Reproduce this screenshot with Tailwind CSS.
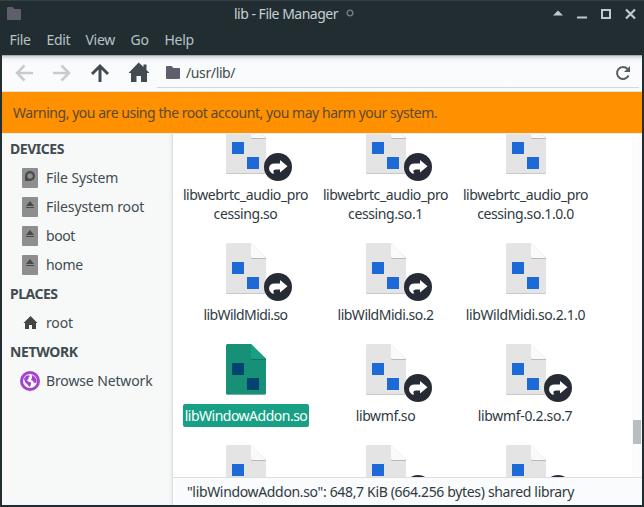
<!DOCTYPE html>
<html lang="en">
<head>
<meta charset="utf-8">
<title>lib - File Manager</title>
<script src="https://cdn.jsdelivr.net/npm/@tailwindcss/browser@4"></script>
</head>
<body class="w-[644px] h-[507px] overflow-hidden bg-[#222d32] font-['Noto_Sans',sans-serif] text-[14px] leading-[19px] text-[#414b50] whitespace-nowrap">
<svg class="hidden">
  <symbol id="doc" viewBox="0 0 40 51">
    <path d="M1.5 1H25L40 16V49.500q0 1.500-1.500 1.500h-37Q0 51 0 49.500V2.500Q0 1 1.500 1Z" fill="#c8c8c8"/>
    <path d="M1.500 0H25L40 15V48.500q0 1.500-1.500 1.500h-37Q0 50 0 48.500V1.500Q0 0 1.500 0Z" fill="#e4e4e4"/>
    <path d="M25 1V14.500q0 1.500 1.500 1.500H40V15Z" fill="#b9b9b9"/>
    <path d="M25 0V13.500q0 1.500 1.500 1.500H40Z" fill="#fafafa"/>
    <path d="M6 19h12v12H6ZM21 34h12v12H21Z" fill="#1d69d6"/>
  </symbol>
  <symbol id="docsel" viewBox="0 0 40 51">
    <path d="M1.500 1H25L40 16V49.500q0 1.500-1.500 1.500h-37Q0 51 0 49.500V2.500Z" fill="#127a66" opacity=".6"/>
    <path d="M1.500 0H25L40 15V48.500q0 1.500-1.500 1.500h-37Q0 50 0 48.500V1.500Q0 0 1.500 0Z" fill="#169178"/>
    <path d="M25 1V14.500q0 1.500 1.500 1.500H40V15Z" fill="#117361"/>
    <path d="M25 0V13.500q0 1.500 1.500 1.500H40Z" fill="#18a085"/>
    <path d="M6 19h12v12H6ZM21 34h12v12H21Z" fill="#03436f"/>
  </symbol>
  <symbol id="link" viewBox="0 0 28 28">
    <circle cx="14" cy="14" r="14" fill="#272b35"/>
    <path d="M16 7 23.500 13.200 16 19.500V16.500H12q-2.500 0-2.700 1.600 0 1.200 1 2.400H8Q5 18.500 5 15.800 5 10.500 11 10.500h5Z" fill="#fff"/>
  </symbol>
  <symbol id="folder" viewBox="0 0 14 13">
    <path d="M1 0H5.500L7.500 2H13q1 0 1 1v9q0 1-1 1H1q-1 0-1-1V1Q0 0 1 0Z" fill="#5d606c"/>
  </symbol>
  <symbol id="eject" viewBox="0 0 16 20">
    <rect width="16" height="20" rx="1" fill="#8e8e8e"/><path d="M8 4 12 9H4ZM4 10h8v1H4Z" fill="#4a4a4a"/>
  </symbol>
</svg>

<header class="h-[55px] flex flex-col border-t border-[#344047] text-[#b6c2c6]">
  <div class="h-[26px] pl-[7px] pr-[8px] flex items-center">
    <svg class="w-[14px] h-[13px] shrink-0 mt-[-2px]"><use href="#folder"/></svg>
    <div class="flex items-center ml-[213px] mt-[-2px]">
      <span class="w-[104px] text-[#c6d0d3] tracking-[-0.5px]">lib - File Manager</span>
      <svg class="w-[8px] h-[8px] ml-[8px]" viewBox="0 0 8 8"><circle cx="4" cy="4" r="2.900" fill="none" stroke="#77808b" stroke-width="1.400"/></svg>
    </div>
    <svg class="w-[83px] h-[12px] ml-auto mt-[-1px]" viewBox="0 0 83 12">
      <path d="M0 7.500 5 2.500 10 7.500Z" fill="#c0cacd"/>
      <path d="M24 8.500h10v2H24Z" fill="#c0cacd"/>
      <path d="M49 2h8v8h-8Z" fill="none" stroke="#c0cacd" stroke-width="2"/>
      <path d="m73 1.500 9 9m0-9-9 9" stroke="#c0cacd" stroke-width="2.200"/>
    </svg>
  </div>
  <nav class="h-[24px] pl-[9.500px] flex items-center gap-[16px] tracking-[-0.3px]">
    <span class="w-[21px]">File</span><span class="w-[23px]">Edit</span><span class="w-[29px]">View</span><span class="w-[18px]">Go</span><span class="w-[29px]">Help</span>
  </nav>
</header>

<main class="ml-[2px] w-[640px] h-[450px] flex flex-col bg-white">
  <div class="h-[37px] shrink-0 bg-[#fafbfc] bg-linear-to-b from-[#d0d2d3] from-0% via-[#f3f4f5] via-10% to-[#fafbfc] to-20% border-t border-[#a9adaf] border-b border-b-[#e1e3e5] flex">
    <svg class="w-[154px] h-[35px] shrink-0" viewBox="0 0 154 35" fill="none" stroke-width="2.500">
      <path d="M31 17H15.500M22.500 9.500 15 17l7.500 7.500" stroke="#c8cbcc"/>
      <path d="M51 17h15.500M59.500 9.500 67 17l-7.500 7.500" stroke="#c8cbcc"/>
      <path d="M98 26V11M90 18l8-8 8 8" stroke="#414b50" stroke-width="3"/>
      <path d="M136.700 6.500 126.500 17h2.500v9h5.500v-6h4.500v6h6v-9h2.500L144.500 14V8.500h-3V11Z" fill="#414b50"/>
    </svg>
    <div class="flex-1 ml-[1px] mr-[3px] h-[32px] border-b border-[#d5d8da] flex items-center pl-[9px] pr-[8px]">
      <svg class="w-[14px] h-[13px] shrink-0 mt-[2px]"><use href="#folder"/></svg>
      <span class="ml-[6px] mt-[2px] tracking-[-0.38px]">/usr/lib/</span>
      <svg class="w-[16px] h-[16px] ml-auto mt-[2px]" viewBox="0 0 16 16"><path d="M13.500 10.500A6 6 0 1 1 12.500 4" fill="none" stroke="#555e62" stroke-width="2"/><path d="M15 1v6H9Z" fill="#555e62"/></svg>
    </div>
  </div>
  <div class="h-[41px] shrink-0 bg-[#ff9100] pl-[11px] flex items-center text-[#5b4a2b] tracking-[-0.46px]"><span>Warning, you are using the root account, you may harm your system.</span></div>
  <div class="flex-1 min-h-0 flex border-t border-[#eceeee]">
    <aside class="w-[171px] shrink-0 bg-[#f7f9f8] border-r border-[#dfe2e2] pt-[5px] flex flex-col tracking-[-0.13px] shadow-[inset_-3px_0_3px_-2px_#e4e6e6]">
      <div class="h-[19px] mb-[5px] pl-[8px] font-bold tracking-[-0.45px]">DEVICES</div>
      <div class="h-[29px] pl-[20px] flex items-center"><svg class="w-[16px] h-[20px]" viewBox="0 0 16 20"><rect width="16" height="20" rx="1" fill="#8e8e8e"/><circle cx="8" cy="8" r="3.900" fill="none" stroke="#4a4a4a" stroke-width="2.200"/><path d="M3 8v5h5l-3-2Z" fill="#4a4a4a"/></svg><span class="ml-[8px]">File System</span></div>
      <div class="h-[29px] pl-[20px] flex items-center"><svg class="w-[16px] h-[20px]"><use href="#eject"/></svg><span class="ml-[8px]">Filesystem root</span></div>
      <div class="h-[29px] pl-[20px] flex items-center"><svg class="w-[16px] h-[20px]"><use href="#eject"/></svg><span class="ml-[8px] tracking-[-0.4px]">boot</span></div>
      <div class="h-[29px] pl-[20px] flex items-center"><svg class="w-[16px] h-[20px]"><use href="#eject"/></svg><span class="ml-[8px] tracking-[-0.3px]">home</span></div>
      <div class="h-[29px] pl-[8px] flex items-center font-bold tracking-[-0.5px]">PLACES</div>
      <div class="h-[29px] pl-[20px] flex items-center"><svg class="w-[16px] h-[14px]" viewBox="0 0 16 14"><path d="M8.500 0 1.500 7H3v6h4V9h3v4h4V7h1.500Z" fill="#444"/></svg><span class="ml-[8px]">root</span></div>
      <div class="h-[29px] pl-[8px] flex items-center font-bold tracking-[-0.35px]">NETWORK</div>
      <div class="h-[29px] pl-[18px] flex items-center"><svg class="w-[20px] h-[20px]" viewBox="0 0 20 20"><circle cx="10" cy="10" r="8.500" fill="#fff" stroke="#a343cf" stroke-width="3"/><path d="M4 7.500 6 5l3-1 .5 2-1.500 1 1 1-2 1 1 1.500 3 1v2l-1.500 2.500-2-2.500L5 11ZM12 4l3 2 1.500 3v2.500L14 12l-1-2-2-1 1-2Z" fill="#a343cf"/></svg><span class="ml-[6px]">Browse Network</span></div>
    </aside>
    <section class="flex-1 min-w-0 flex flex-col">
      <div class="flex-1 min-h-0 flex overflow-hidden">
        <div class="mt-[-11px] ml-[3px] h-[500px] grid grid-cols-[repeat(3,140px)] grid-rows-[120px_101px_101px_101px] text-center text-[#2f3a3f] shrink-0 tracking-[-0.4px]">
          <div class="flex flex-col items-center"><div class="relative w-[40px] h-[51px]"><svg class="w-[40px] h-[51px]"><use href="#doc"/></svg><svg class="absolute left-[38px] top-[30px] w-[28px] h-[28px]"><use href="#link"/></svg></div><div class="mt-[11px] mr-px">libwebrtc_audio_pro<br>cessing.so</div></div>
          <div class="flex flex-col items-center"><div class="relative w-[40px] h-[51px]"><svg class="w-[40px] h-[51px]"><use href="#doc"/></svg><svg class="absolute left-[38px] top-[30px] w-[28px] h-[28px]"><use href="#link"/></svg></div><div class="mt-[11px] mr-px">libwebrtc_audio_pro<br>cessing.so.1</div></div>
          <div class="flex flex-col items-center"><svg class="w-[40px] h-[51px]"><use href="#doc"/></svg><div class="mt-[11px] mr-px">libwebrtc_audio_pro<br>cessing.so.1.0.0</div></div>

          <div class="flex flex-col items-center"><div class="relative w-[40px] h-[51px]"><svg class="w-[40px] h-[51px]"><use href="#doc"/></svg><svg class="absolute left-[38px] top-[30px] w-[28px] h-[28px]"><use href="#link"/></svg></div><div class="mt-[11px] mr-px tracking-[-0.58px]">libWildMidi.so</div></div>
          <div class="flex flex-col items-center"><div class="relative w-[40px] h-[51px]"><svg class="w-[40px] h-[51px]"><use href="#doc"/></svg><svg class="absolute left-[38px] top-[30px] w-[28px] h-[28px]"><use href="#link"/></svg></div><div class="mt-[11px] mr-px tracking-[-0.5px]">libWildMidi.so.2</div></div>
          <div class="flex flex-col items-center"><svg class="w-[40px] h-[51px]"><use href="#doc"/></svg><div class="mt-[11px] mr-px">libWildMidi.so.2.1.0</div></div>

          <div class="flex flex-col items-center"><svg class="w-[40px] h-[51px]"><use href="#docsel"/></svg><div class="mt-[9px] w-[126px] h-[23px] py-[2px] rounded-[2px] bg-[#18a085] text-white tracking-[-0.5px]">libWindowAddon.so</div></div>
          <div class="flex flex-col items-center"><div class="relative w-[40px] h-[51px]"><svg class="w-[40px] h-[51px]"><use href="#doc"/></svg><svg class="absolute left-[38px] top-[30px] w-[28px] h-[28px]"><use href="#link"/></svg></div><div class="mt-[11px] mr-px">libwmf.so</div></div>
          <div class="flex flex-col items-center"><div class="relative w-[40px] h-[51px]"><svg class="w-[40px] h-[51px]"><use href="#doc"/></svg><svg class="absolute left-[38px] top-[30px] w-[28px] h-[28px]"><use href="#link"/></svg></div><div class="mt-[11px] mr-[2px] tracking-[-0.33px]">libwmf-0.2.so.7</div></div>

          <div class="flex flex-col items-center"><svg class="w-[40px] h-[51px]"><use href="#doc"/></svg></div>
          <div class="flex flex-col items-center"><div class="relative w-[40px] h-[51px]"><svg class="w-[40px] h-[51px]"><use href="#doc"/></svg><svg class="absolute left-[38px] top-[30px] w-[28px] h-[28px]"><use href="#link"/></svg></div></div>
          <div class="flex flex-col items-center"><div class="relative w-[40px] h-[51px]"><svg class="w-[40px] h-[51px]"><use href="#doc"/></svg><svg class="absolute left-[38px] top-[30px] w-[28px] h-[28px]"><use href="#link"/></svg></div></div>
        </div>
        <div class="ml-auto w-[10px] bg-[#fcfcfc] border-x border-[#fafafa] pt-[286px]"><div class="h-[24px] bg-[#b9bdbf]"></div></div>
      </div>
      <footer class="h-[28px] shrink-0 bg-[#fafbfc] border-t border-[#dcdfe1] pl-[14px] flex items-center text-[#2f3a3f] tracking-[-0.34px]"><span>"libWindowAddon.so": 648,7 KiB (664.256 bytes) shared library</span></footer>
    </section>
  </div>
</main>
</body>
</html>
